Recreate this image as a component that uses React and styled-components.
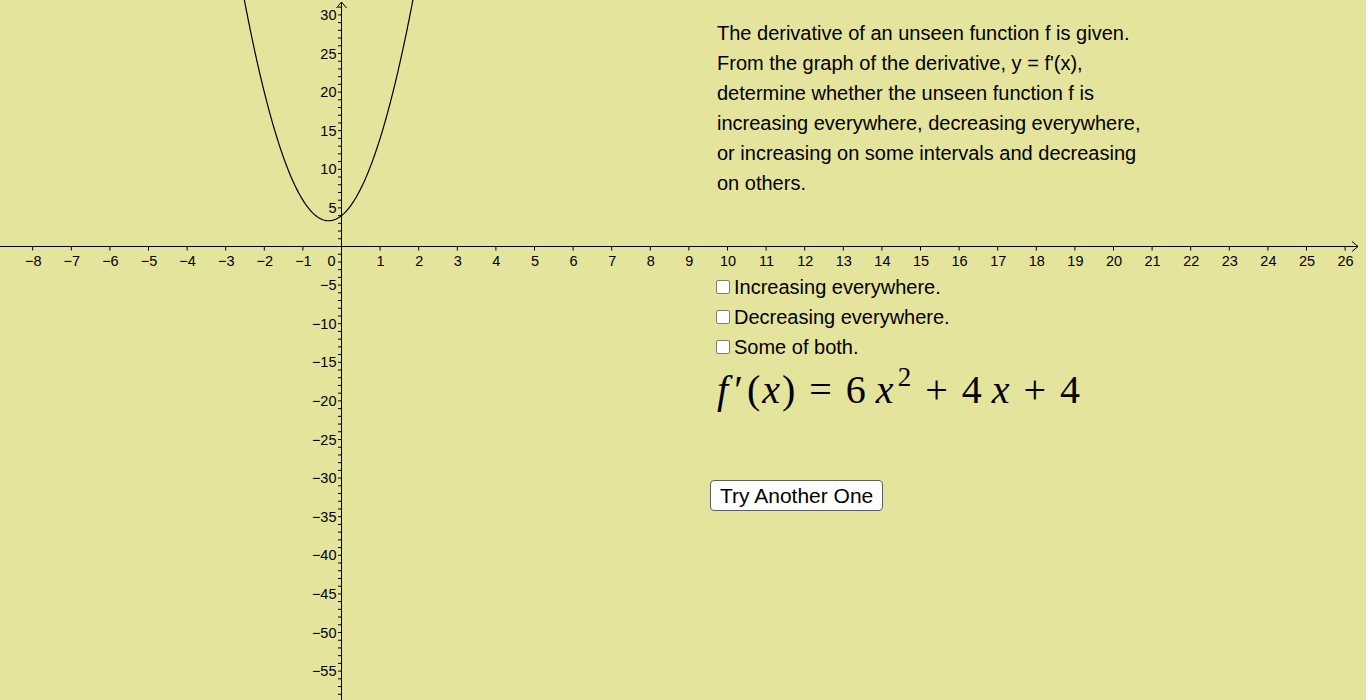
import styled, { createGlobalStyle } from 'styled-components';

const GlobalStyle = createGlobalStyle`
  html, body {
    margin: 0;
    padding: 0;
    overflow: hidden;
  }
  body {
    font-family: "Liberation Sans", Arial, sans-serif;
    background: #e5e49d;
  }
`;

const BG = '#e5e49d';

// graph geometry
const OX = 341.5;
const OY = 246.5;
const UX = 38.6;
const UY = 7.72;
const W = 1366;
const H = 700;

const Applet = styled.div`
  position: relative;
  width: ${W}px;
  height: ${H}px;
  background: ${BG};
  overflow: hidden;
`;

const Canvas = styled.svg`
  position: absolute;
  inset: 0;
  display: block;
`;

const Panel = styled.div`
  position: absolute;
  left: 710px;
  top: 18px;
  display: flex;
  flex-direction: column;
  align-items: flex-start;
  color: #000;
`;

const Question = styled.p`
  margin: 0 0 0 7px;
  font-size: 20px;
  line-height: 30px;
  width: 460px;
`;

const Choices = styled.div`
  display: flex;
  flex-direction: column;
  margin: 74px 0 0 6px;
`;

const Choice = styled.label`
  display: flex;
  align-items: center;
  height: 30px;
  font-size: 20px;
  gap: 4px;
`;

const Box = styled.span`
  width: 12px;
  height: 12px;
  border: 1.5px solid #807f6e;
  border-radius: 2px;
  background: #fff;
`;

const Formula = styled.div`
  display: flex;
  align-items: baseline;
  margin: 4px 0 0 7px;
  font-family: "Liberation Serif", "Times New Roman", serif;
  font-size: 40px;
  line-height: 48px;
  white-space: pre;
`;

const Var = styled.i`
  font-style: italic;
  margin-left: ${(p) => p.$l || 0}px;
  margin-right: ${(p) => p.$r || 0}px;
`;

const Sym = styled.span`
  margin-left: ${(p) => p.$l || 0}px;
  margin-right: ${(p) => p.$r || 0}px;
`;

const Op = styled.span`
  margin: 0 14px;
`;

const Sup = styled.sup`
  font-size: 27px;
  position: relative;
  top: -17px;
  margin-left: 4px;
  line-height: 0;
  vertical-align: baseline;
`;

const Button = styled.button`
  margin-top: 66px;
  height: 31px;
  padding: 0 9px;
  background: #fff;
  border: 1px solid #5f5f5f;
  border-radius: 4px;
  font-family: "Liberation Sans", Arial, sans-serif;
  font-size: 21px;
  color: #000;
`;

const px = (x) => OX + x * UX;
const py = (y) => OY - y * UY;
const minus = (n) => (n < 0 ? '\u2212' + Math.abs(n) : String(n));

const Graph = () => {
  const xs = [];
  for (let i = -8; i <= 26; i++) if (i !== 0) xs.push(i);
  const yMinor = [];
  for (let j = -58; j <= 31; j++) if (j !== 0) yMinor.push(j);
  const yLabels = [];
  for (let j = -55; j <= 30; j += 5) if (j !== 0) yLabels.push(j);

  const pts = [];
  for (let x = -2.7; x <= 2.0; x += 0.02) {
    const y = 6 * x * x + 4 * x + 4;
    pts.push(`${px(x).toFixed(2)},${py(y).toFixed(2)}`);
  }

  return (
    <Canvas width={W} height={H} viewBox={`0 0 ${W} ${H}`}>
      <g stroke="#000" strokeWidth="1" fill="none">
        <line x1="0" y1={OY} x2={W - 8} y2={OY} />
        <polyline points={`${W - 14},${OY - 5} ${W - 8},${OY} ${W - 14},${OY + 5}`} />
        <line x1={OX} y1="2" x2={OX} y2={H} />
        <polyline points={`${OX - 5},${8} ${OX},${2} ${OX + 5},${8}`} />
        {xs.map((i) => (
          <line key={'xt' + i} x1={px(i)} y1={OY} x2={px(i)} y2={OY + 4} />
        ))}
        {yMinor.map((j) => (
          <line key={'yt' + j} x1={OX - 3.5} y1={py(j)} x2={OX} y2={py(j)} />
        ))}
      </g>
      <g fill="#000" fontFamily="Liberation Sans, Arial, sans-serif" fontSize="14.5">
        {xs.map((i) => (
          <text key={'xl' + i} x={px(i) + 0.5} y={OY + 19} textAnchor="middle">
            {minus(i)}
          </text>
        ))}
        <text x={OX - 6} y={OY + 19} textAnchor="end">0</text>
        {yLabels.map((j) => (
          <text key={'yl' + j} x={OX - 5} y={py(j) + 5} textAnchor="end">
            {minus(j)}
          </text>
        ))}
      </g>
      <polyline points={pts.join(' ')} fill="none" stroke="#000" strokeWidth="1.2" />
    </Canvas>
  );
};

const options = ['Increasing everywhere.', 'Decreasing everywhere.', 'Some of both.'];

export default function App() {
  return (
    <>
      <GlobalStyle />
      <Applet>
        <Graph />
        <Panel>
          <Question>
            The derivative of an unseen function f is given.
            <br />
            From the graph of the derivative, y = f'(x),
            <br />
            determine whether the unseen function f is
            <br />
            increasing everywhere, decreasing everywhere,
            <br />
            or increasing on some intervals and decreasing
            <br />
            on others.
          </Question>
          <Choices>
            {options.map((o) => (
              <Choice key={o}>
                <Box />
                {o}
              </Choice>
            ))}
          </Choices>
          <Formula>
            <Var $r={6}>f</Var>
            <Sym $r={4}>′</Sym>
            <Sym>(</Sym>
            <Var $l={2} $r={2}>x</Var>
            <Sym>)</Sym>
            <Op>=</Op>
            <Sym $r={10}>6</Sym>
            <Var>x</Var>
            <Sup>2</Sup>
            <Op>+</Op>
            <Sym $r={10}>4</Sym>
            <Var>x</Var>
            <Op>+</Op>
            <Sym>4</Sym>
          </Formula>
          <Button>Try Another One</Button>
        </Panel>
      </Applet>
    </>
  );
}
